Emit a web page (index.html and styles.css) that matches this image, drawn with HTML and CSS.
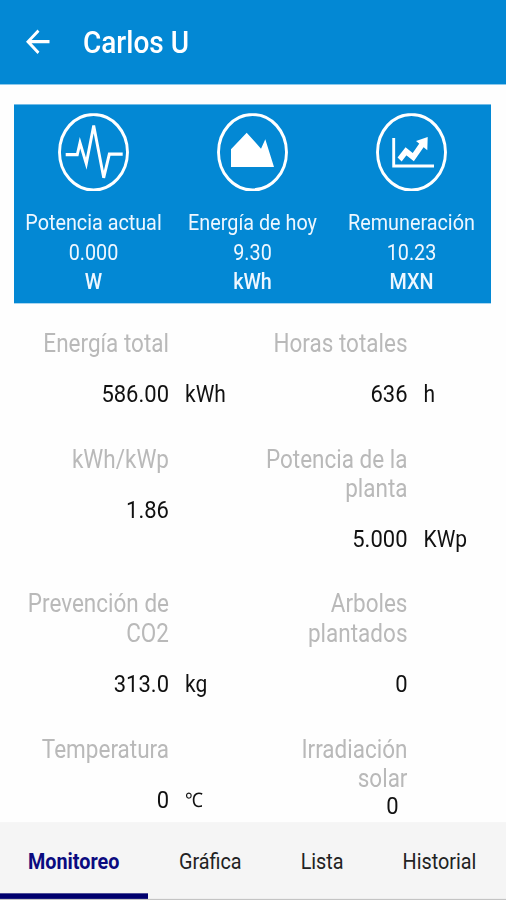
FILE: index.html
```html
<!DOCTYPE html>
<html lang="es">
	<head>
		<meta charset="UTF-8">
		<title>Carlos U</title>
		<link rel="stylesheet" href="styles.css">
	</head>
	<body>
		<div class="app">
			<header class="bar">
				<svg class="back" width="24" height="24" viewBox="0 0 24 24"><path d="M23.5 11.5H2M12.5 1.5L2 11.5L12.5 21.5"/></svg>
				<h1>Carlos U</h1>
			</header>
			<main class="content">
				<section class="summary">
					<div class="card">
						<svg class="icon" width="71" height="70" viewBox="0 0 71 70">
							<circle cx="35.5" cy="35" r="34"/>
							<path d="M7.7 37.2H19.3L22 26.4L28.3 45.3L35.7 11L45.7 58L51.3 36.8H64.7"/>
						</svg>
						<p>Potencia actual</p>
						<p>0.000</p>
						<p class="name">W</p>
					</div>
					<div class="card">
						<svg class="icon" width="71" height="70" viewBox="0 0 71 70">
							<circle cx="35.5" cy="35" r="34"/>
							<path class="solid" d="M14 32.4L29.7 17.4L44 31.8L48.3 23.4L57 48.3H14Z"/>
						</svg>
						<p>Energía de hoy</p>
						<p>9.30</p>
						<p class="name">kWh</p>
					</div>
					<div class="card">
						<svg class="icon" width="71" height="70" viewBox="0 0 71 70">
							<circle cx="35.5" cy="35" r="34"/>
							<path d="M17.7 22.2V47.4H58"/>
							<path class="thick" d="M23.6 41.6L30 34.2L37.3 39.4L46.5 27.5"/>
							<path class="solid" d="M40 24.9L51.7 21.3L51.3 33.3Z"/>
						</svg>
						<p>Remuneración</p>
						<p>10.23</p>
						<p class="name">MXN</p>
					</div>
				</section>
				<section class="data">
					<div class="item">
						<span class="label">Energía total</span>
						<span class="value">586.00</span>
						<span class="unit">kWh</span>
					</div>
					<div class="item">
						<span class="label">Horas totales</span>
						<span class="value">636</span>
						<span class="unit">h</span>
					</div>
					<div class="item">
						<span class="label">kWh/kWp</span>
						<span class="value">1.86</span>
					</div>
					<div class="item">
						<span class="label">Potencia de la planta</span>
						<span class="value">5.000</span>
						<span class="unit">KWp</span>
					</div>
					<div class="item">
						<span class="label">Prevención de CO2</span>
						<span class="value">313.0</span>
						<span class="unit">kg</span>
					</div>
					<div class="item">
						<span class="label">Arboles plantados</span>
						<span class="value">0</span>
					</div>
					<div class="item">
						<span class="label">Temperatura</span>
						<span class="value">0</span>
						<span class="unit degree">℃</span>
					</div>
					<div class="item tight">
						<span class="label">Irradiación solar</span>
						<span class="value">0</span>
					</div>
				</section>
			</main>
			<nav class="tabs">
				<a class="tab active">Monitoreo</a>
				<a class="tab">Gráfica</a>
				<a class="tab">Lista</a>
				<a class="tab">Historial</a>
			</nav>
		</div>
	</body>
</html>
```

FILE: styles.css
```css
*{
	box-sizing: border-box;
}
body{
	margin: 0;
	height: 900px;
	overflow: hidden;
	background: #fefefe;
	font-family: Roboto, sans-serif;
}
/* 506x810 layout stretched to the full window height */
.app{
	width: 506px;
	height: 810px;
	display: flex;
	flex-direction: column;
	transform: scaleY(1.1111);
	transform-origin: 0 0;
}
.bar{
	flex: none;
	height: 76px;
	padding-left: 26px;
	display: flex;
	align-items: center;
	background: #0388d4;
	color: #fff;
}
.back{
	fill: none;
	stroke: #fff;
	stroke-width: 2.8;
}
.bar h1{
	margin: 0 0 0 33px;
	font-size: 28px;
	font-weight: 500;
}
.content{
	flex: 1;
	min-height: 0;
	overflow: hidden;
	padding: 18px 15px 0 14px;
}
.summary{
	height: 178.5px;
	padding-top: 8px;
	display: grid;
	grid-template-columns: repeat(3, 1fr);
	background: #0388d4;
	color: #eef7ff;
	text-align: center;
}
.card p{
	margin: 0;
	font-size: 19.8px;
	line-height: 26.5px;
}
.card .name{
	font-weight: 500;
}
.icon{
	display: block;
	margin: 0 auto 16px;
	fill: none;
	stroke: #fff;
	stroke-width: 2.9;
}
.icon .solid{
	fill: #fff;
	stroke: none;
}
.icon .thick{
	stroke-width: 5.4;
}
.data{
	padding-top: 23px;
	display: grid;
	grid-template-columns: repeat(2, 1fr);
	row-gap: 31.5px;
}
.item{
	display: grid;
	grid-template-columns: 155px 1fr;
	column-gap: 16px;
	align-content: start;
	row-gap: 19.5px;
	font-size: 22px;
	line-height: 26.5px;
	color: #111;
}
.label{
	grid-column: 1;
	text-align: right;
	font-size: 22.5px;
	color: #b9b9b9;
}
.value{
	grid-column: 1;
	text-align: right;
}
.unit{
	grid-column: 2;
	font-size: 21px;
}
.degree{
	font-size: 18px;
}
.tight{
	row-gap: 0;
}
.tight .value{
	padding-right: 9px;
	line-height: 23.5px;
}
.tabs{
	flex: none;
	height: 70px;
	display: flex;
	background: #f5f5f5;
	border-bottom: 1px solid #c4c4c4;
}
.tab{
	padding: 0 0 0 31px;
	margin-right: 28px;
	font-size: 19.8px;
	line-height: 71px;
	color: #222;
}
.active{
	width: 148px;
	height: 69px;
	margin-right: 0;
	padding-left: 28px;
	font-weight: 700;
	color: #0b0b80;
	border-bottom: 5px solid #00006e;
}
```
